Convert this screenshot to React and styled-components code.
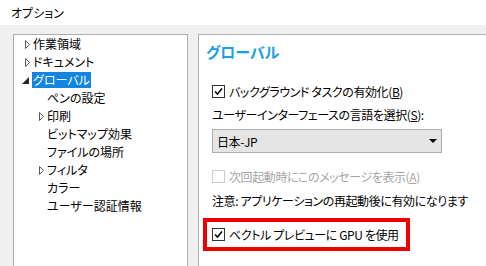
import React from "react";
import styled, { createGlobalStyle } from "styled-components";

const GlobalStyle = createGlobalStyle`
  html, body {
    margin: 0;
    padding: 0;
    background: #f0f0f0;
    overflow: hidden;
  }
  body {
    font-family: "Noto Sans CJK JP", "Noto Sans", sans-serif;
    font-feature-settings: "palt";
    font-size: 12px;
    color: #000;
  }
`;

const Window = styled.div`
  width: 486px;
  height: 266px;
  display: flex;
  flex-direction: column;
  background: #f0f0f0;
`;

const TitleBar = styled.div`
  height: 25px;
  background: #fff;
  display: flex;
  align-items: center;
  padding-left: 11px;
  font-size: 12px;
  line-height: 25px;
`;

const Body = styled.div`
  flex: 1;
  display: flex;
  gap: 10px;
  padding: 9px 0 0 13px;
  overflow: hidden;
`;

const TreePane = styled.ul`
  list-style: none;
  margin: 0;
  padding: 0;
  width: 173px;
  height: 260px;
  flex: none;
  background: #fff;
  border: 1px solid #adadad;
`;

const TreeRow = styled.li`
  height: 18px;
  display: flex;
  align-items: center;
  padding-left: ${(p) => (p.$level === 0 ? 8 : 22)}px;
`;

const Toggle = styled.span`
  width: 11px;
  height: 18px;
  flex: none;
  display: flex;
  align-items: center;
  justify-content: ${(p) => (p.$open ? "flex-start" : "center")};
`;

const Label = styled.span`
  line-height: 16px;
  padding: 0 1px;
  margin-left: -1px;
  white-space: nowrap;
  background: ${(p) => (p.$selected ? "#1185e0" : "transparent")};
  color: ${(p) => (p.$selected ? "#fff" : "#000")};
`;

const SettingsPane = styled.div`
  flex: 1;
  height: 260px;
  background: #fff;
  border-top: 1px solid #adadad;
  border-left: 1px solid #adadad;
  display: flex;
  flex-direction: column;
  align-items: flex-start;
  padding-left: 13px;
  letter-spacing: -0.4px;
`;

const Heading = styled.h2`
  margin: 7px 0 0 -6px;
  height: 20px;
  line-height: 20px;
  font-size: 15px;
  font-weight: 700;
  letter-spacing: 0;
  color: #1ba0e2;
`;

const CheckRow = styled.label`
  display: flex;
  align-items: center;
  gap: 4px;
  height: ${(p) => p.$h || 18}px;
  margin-top: ${(p) => p.$mt || 0}px;
  color: ${(p) => (p.$disabled ? "#a6a6a6" : "#000")};
  white-space: nowrap;
`;

const Box = styled.span`
  width: 11px;
  height: 11px;
  flex: none;
  border: 1px solid ${(p) => (p.$disabled ? "#cccccc" : "#333333")};
  background: #fff;
  display: flex;
  align-items: center;
  justify-content: center;
`;

const Text = styled.div`
  height: 18px;
  line-height: 18px;
  margin-top: ${(p) => p.$mt || 0}px;
  white-space: nowrap;
`;

const Select = styled.div`
  margin-top: 5px;
  width: 220px;
  height: 22px;
  border: 1px solid #adadad;
  background: #e5e5e5;
  display: flex;
  align-items: center;
  justify-content: space-between;
  padding: 0 4px;
`;

const Highlight = styled.div`
  margin: 8px 0 0 -9px;
  border: 4px solid #ee0000;
  padding: 0 7px 0 5px;
`;

const Check = () => (
  <svg width="9" height="9" viewBox="0 0 9 9">
    <polyline
      points="1,4.5 3.5,7 8,1.5"
      fill="none"
      stroke="#000"
      strokeWidth="1.6"
    />
  </svg>
);

const Closed = () => (
  <svg width="5" height="9" viewBox="0 0 5 9">
    <polygon points="0.5,0.5 4.5,4.5 0.5,8.5" fill="#fff" stroke="#5a5a5a" />
  </svg>
);

const Open = () => (
  <svg width="7" height="7" viewBox="0 0 7 7">
    <polygon points="7,0 7,7 0,7" fill="#262626" />
  </svg>
);

const Arrow = () => (
  <svg width="8" height="4" viewBox="0 0 8 4">
    <polygon points="0,0 8,0 4,4" fill="#000" />
  </svg>
);

const tree = [
  { label: "作業領域", level: 0, toggle: "closed" },
  { label: "ドキュメント", level: 0, toggle: "closed" },
  { label: "グローバル", level: 0, toggle: "open", selected: true },
  { label: "ペンの設定", level: 1 },
  { label: "印刷", level: 1, toggle: "closed" },
  { label: "ビットマップ効果", level: 1 },
  { label: "ファイルの場所", level: 1 },
  { label: "フィルタ", level: 1, toggle: "closed" },
  { label: "カラー", level: 1 },
  { label: "ユーザー認証情報", level: 1 },
];

const Checkbox = ({ checked, disabled, children, mt, h }) => (
  <CheckRow $disabled={disabled} $mt={mt} $h={h}>
    <Box $disabled={disabled}>{checked && <Check />}</Box>
    <span>{children}</span>
  </CheckRow>
);

export default function App() {
  return (
    <>
      <GlobalStyle />
      <Window>
        <TitleBar>オプション</TitleBar>
        <Body>
          <TreePane>
            {tree.map((item) => (
              <TreeRow key={item.label} $level={item.level}>
                <Toggle $open={item.toggle === "open"}>
                  {item.toggle === "closed" && <Closed />}
                  {item.toggle === "open" && <Open />}
                </Toggle>
                <Label $selected={item.selected}>{item.label}</Label>
              </TreeRow>
            ))}
          </TreePane>
          <SettingsPane>
            <Heading>グローバル</Heading>
            <Checkbox checked mt={20}>
              バックグラウンド タスクの有効化(<u>B</u>)
            </Checkbox>
            <Text $mt={6}>
              ユーザーインターフェースの言語を選択(<u>S</u>):
            </Text>
            <Select>
              <span>日本-JP</span>
              <Arrow />
            </Select>
            <Checkbox disabled mt={14}>
              次回起動時にこのメッセージを表示(<u>A</u>)
            </Checkbox>
            <Text $mt={7}>注意: アプリケーションの再起動後に有効になります</Text>
            <Highlight>
              <Checkbox checked h={25}>
                ベクトル プレビューに GPU を使用
              </Checkbox>
            </Highlight>
          </SettingsPane>
        </Body>
      </Window>
    </>
  );
}
